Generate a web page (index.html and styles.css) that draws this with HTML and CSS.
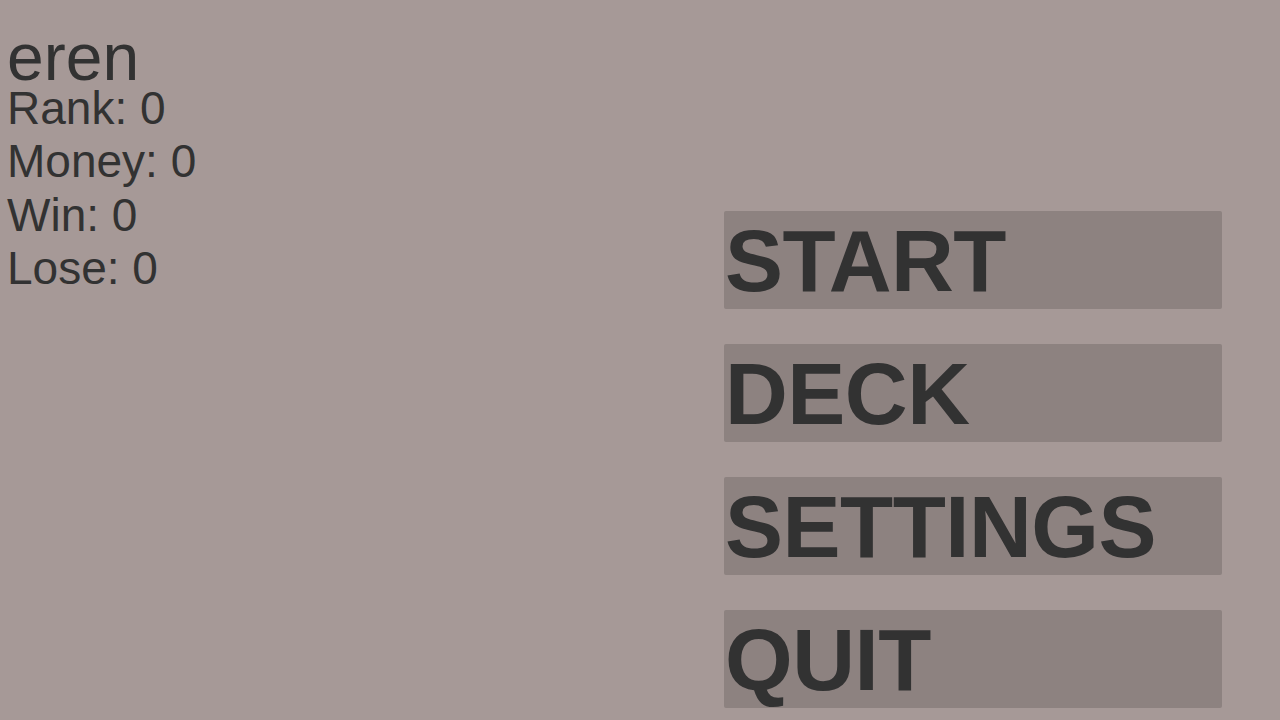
FILE: index.html
```html
<!DOCTYPE html>
<html>
<head>
<meta charset="utf-8">
<link rel="stylesheet" href="styles.css">
</head>
<body>
<div class="screen">
  <div class="profile">
    <div class="name">eren</div>
    <div class="stat">Rank: 0</div>
    <div class="stat">Money: 0</div>
    <div class="stat">Win: 0</div>
    <div class="stat">Lose: 0</div>
  </div>
  <div class="menu">
    <div class="btn">START</div>
    <div class="btn">DECK</div>
    <div class="btn">SETTINGS</div>
    <div class="btn">QUIT</div>
  </div>
</div>
</body>
</html>
```
FILE: styles.css
```css
html, body {
  margin: 0;
  padding: 0;
  width: 1280px;
  height: 720px;
  overflow: hidden;
  background: #a69997;
}
.screen {
  display: flex;
  width: 1280px;
  height: 720px;
  font-family: "Liberation Sans", Arial, sans-serif;
  color: #323232;
}
.profile {
  padding: 33px 0 0 7px;
  width: 724px;
  box-sizing: border-box;
}
.name {
  font-size: 66px;
  line-height: 49px;
}
.stat {
  font-size: 46px;
  line-height: 53.3px;
}
.menu {
  display: flex;
  flex-direction: column;
  gap: 35px;
  padding-top: 211px;
  width: 498px;
}
.btn {
  height: 98px;
  background: #8d8280;
  border-radius: 2px;
  font-size: 87px;
  font-weight: bold;
  line-height: 100px;
  letter-spacing: -0.5px;
  padding-left: 1px;
  overflow: hidden;
}
```
